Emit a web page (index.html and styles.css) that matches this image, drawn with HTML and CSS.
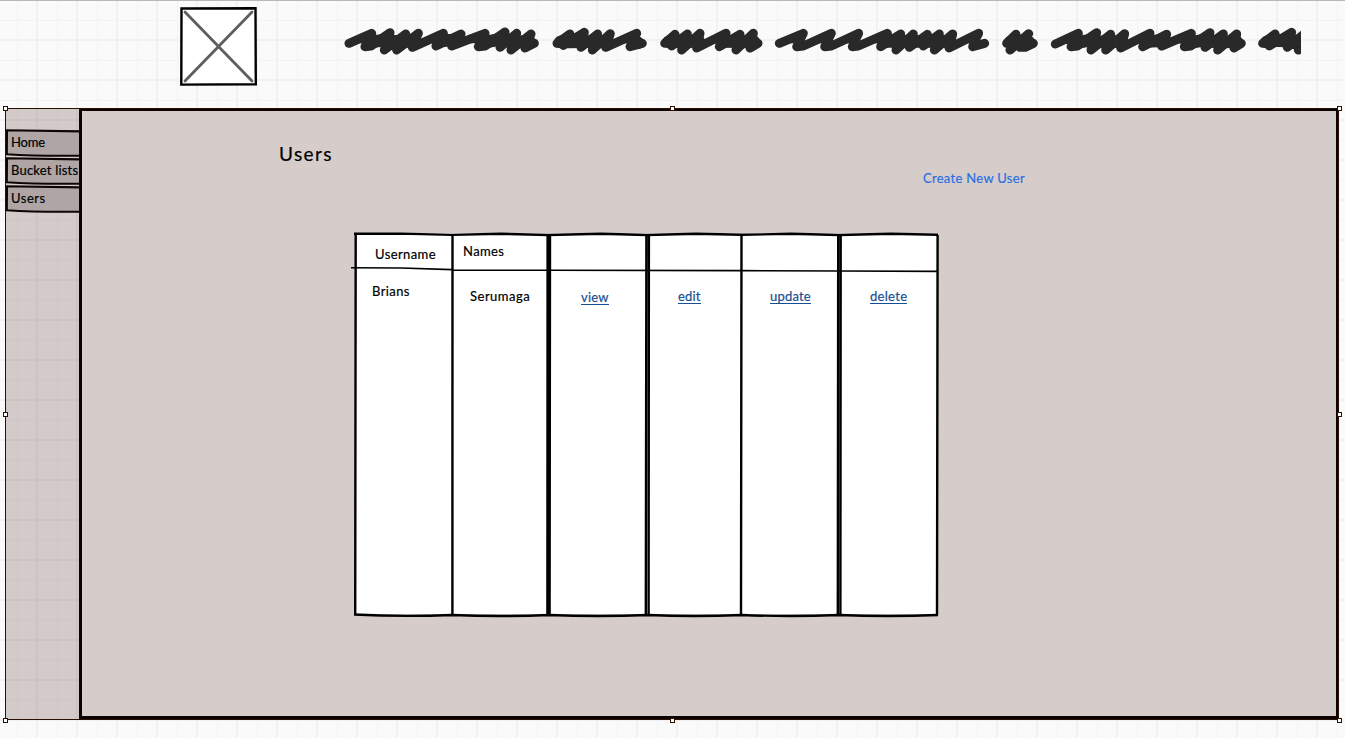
FILE: index.html
```
<!DOCTYPE html>
<html lang="en">
<head>
<meta charset="utf-8">
<title>Users</title>
<link rel="stylesheet" href="styles.css">
</head>
<body>
<div class="canvas">
  <header class="banner">
    <svg class="logo" width="77" height="79" viewBox="0 0 77 79">
      <path d="M1.5 1.5L75.5 1.2L75.8 77.3L1.3 77.6Z" fill="#fff" stroke="#000" stroke-width="2.4"/>
      <path d="M5 5L72 74M72 5L5 74" stroke="#5e5e5e" stroke-width="2.8" stroke-linecap="round"/>
    </svg>
    <svg class="scribble" width="958" height="45" viewBox="0 0 2874 135">
      <g class="ink" transform="translate(-24 0)">
        <path d="M42 70L110 40L98 60L90 80L108 78L165 38L148 90L212 42L185 90L250 40L232 82L325 40L312 60L303 78L378 42L350 78L450 40L440 60L430 80L450 78L510 36L495 82L545 40L528 90L588 42L570 84L598 70"/>
        <path class="core" d="M154 64L238 64M318 62L366 60M498 62L584 66M106 66L150 60M442 68L495 58"/>
        <path d="M666 70L705 42L685 76L748 37L738 82L788 42L772 90L826 41L812 82L905 40L895 60L885 80L922 70"/>
        <path class="core" d="M676 66L718 58M700 66L816 64M896 68L908 68"/>
      </g>
      <g class="ink" transform="translate(921 0)">
        <path d="M44 70L75 43L65 78L112 42L95 90L150 40L140 84L228 40L215 60L208 80L270 43L258 90L310 40L300 84L324 70"/>
        <path class="core" d="M56 66L146 64M222 64L312 66"/>
        <path d="M388 70L460 40L450 60L440 80L460 78L544 40L534 60L524 80L544 78L626 40L616 60L607 80L625 78L712 40L700 60L692 80L752 42L738 90L790 42L778 82L832 43L820 78L868 42L853 90L908 42L897 84L986 40L975 60L968 80L1004 70"/>
        <path class="core" d="M704 64L900 64"/>
      </g>
      <g class="ink" transform="translate(1941 0)">
        <path d="M50 70L78 43L60 90L116 41L90 82L105 82L130 70"/>
        <path class="core" d="M62 66L116 66"/>
        <path d="M196 72L265 40L253 60L243 80L262 78L320 38L303 90L362 43L347 90L404 41L392 84L480 40L468 60L458 80L530 43L515 78L604 40L592 60L583 80L602 78L660 38L645 82L700 42L683 90L740 42L732 84L754 70"/>
        <path class="core" d="M258 68L304 60M310 66L396 64M470 64L522 62M598 68L644 60M650 64L740 66"/>
        <path d="M818 70L855 42L838 78L905 37L892 82L945 40L925 90"/>
        <path class="core" d="M830 66L862 60M860 62L940 64"/>
      </g>
    </svg>
  </header>

  <main class="frame">
    <nav class="tabs">
      <a class="tab"><svg class="tab-line" viewBox="0 0 75 28"><path d="M75 2.4L1 1.3L.8 25.3Q30 27.2 75 26.7"/></svg><span class="tab-home">Home</span></a>
      <a class="tab"><svg class="tab-line" viewBox="0 0 75 28"><path d="M75 2.4L1 1.3L.8 25.3Q30 27.2 75 26.7"/></svg><span class="tab-lists">Bucket lists</span></a>
      <a class="tab"><svg class="tab-line" viewBox="0 0 75 28"><path d="M75 2.4L1 1.3L.8 25.3Q30 27.2 75 26.7"/></svg><span class="tab-users">Users</span></a>
    </nav>
    <section class="panel">
      <div class="panel-head">
        <h1 class="title">Users</h1>
        <a class="create">Create New User</a>
      </div>
      <div class="table">
        <svg class="rules" width="590" height="386" viewBox="0 0 590 386">
          <g fill="none" stroke="#000" stroke-width="2.4">
            <path d="M4.7 2L4.2 383M101.5 3L101.4 383M390.5 3L390 383M586.6 3L586 383"/>
            <path d="M3 1.8L50 1.6L101 2.9L150 1.8L197 3L250 1.8L296 3L345 1.8L391 2.8L440 1.8L488 3L540 1.8L587 2.8"/>
            <path d="M3 382.5Q50 385 101 383Q150 385 198 383Q247 385 297 383Q343 385 391 383Q439 385 488 383Q537 385 587 383"/>
            <path d="M196.6 3L196.4 383M199 3L198.6 383M295.4 3L294.8 383M297.9 3L297.6 383M487.2 3L486.8 383M489.7 3L489.4 383"/>
            <path stroke-width="1.6" d="M0 35.7L50 36L101 37.6M102 38.2L200 38.3L390 38.6L490 39L587 39.4"/>
          </g>
        </svg>
        <div class="col"><b class="cell c-username">Username</b><span class="cell c-brians">Brians</span></div>
        <div class="col"><b class="cell c-names">Names</b><span class="cell c-serumaga">Serumaga</span></div>
        <div class="col"><a class="link l-view">view</a></div>
        <div class="col"><a class="link l-edit">edit</a></div>
        <div class="col"><a class="link l-update">update</a></div>
        <div class="col"><a class="link l-delete">delete</a></div>
      </div>
    </section>
    <i class="handle nw"></i><i class="handle n"></i><i class="handle ne"></i>
    <i class="handle w"></i><i class="handle e"></i>
    <i class="handle sw"></i><i class="handle s"></i><i class="handle se"></i>
  </main>
</div>
</body>
</html>
```
FILE: styles.css
```
* { box-sizing: border-box; }
body {
  margin: 0; overflow: hidden; color: #000;
  font-family: Lato, "Open Sans", sans-serif; font-size: 13px; line-height: 16px;
  -webkit-text-stroke: .2px currentColor;
}
.canvas {
  width: 1345px; height: 738px; border-top: 1px solid #b8b8b8;
  background-color: #fafafa;
  background-image:
    linear-gradient(90deg, #f1f1f1 2px, transparent 2px),
    linear-gradient(#f1f1f1 2px, transparent 2px),
    linear-gradient(90deg, #f3f3f3 1px, transparent 1px),
    linear-gradient(#f3f3f3 1px, transparent 1px);
  background-size: 40px 40px;
  background-position: 36px 0, 0 38px, 17px 0, 0 19px;
}
.banner { display: flex; height: 107px; padding: 6px 0 0 180px; }
.logo { flex: none; display: block; }
.scribble { display: block; flex: none; margin: 13px 0 0 86px; overflow: hidden; }
.ink { fill: #292929; stroke: #292929; stroke-width: 27px; stroke-linecap: round; stroke-linejoin: round; }
.core { stroke-width: 38px; }

.frame {
  position: relative; display: flex; width: 1334px; height: 612px; margin-left: 5px;
  border: 1px solid #2b0f00; background: rgba(100, 70, 66, .26);
}
.tabs { flex: none; width: 73px; padding-top: 20px; }
.tab { position: relative; display: flex; height: 28px; padding: 5px 0 0 5px; letter-spacing: .1px; white-space: nowrap; }
.tab span { position: relative; }
.tab-home { letter-spacing: -.2px; }
.tab-lists { letter-spacing: .2px; }
.tab-users { letter-spacing: .5px; }
.tab-line { position: absolute; left: 0; top: 0; width: 75px; height: 28px; }
.tab-line path { fill: #aea5a4; stroke: #0d0503; stroke-width: 2.1px; }
.panel { position: relative; flex: 1; border: solid #0b0200; border-width: 2px 2px 3px 3px; background: #d6cdcb; }
.panel-head { display: flex; height: 122px; }
.title { margin: 30px 0 0 197px; width: 644px; font-size: 19px; line-height: 26px; font-weight: 400; letter-spacing: 1.4px; }
.create { margin-top: 59px; color: #2b6fe0; letter-spacing: .3px; }
.table { position: relative; display: grid; grid-template-columns: 97px 96px 99px 94px 98px 98px; width: 582px; height: 381px; margin-left: 273px; background: #fff; }
.rules { position: absolute; left: -4px; top: -1px; }
.col { position: relative; display: flex; flex-direction: column; align-items: flex-start; }
.cell { display: block; font-weight: 400; letter-spacing: .4px; }
.c-username { margin: 13px 0 0 20px; }
.c-brians { margin: 21px 0 0 17px; }
.c-names { margin: 10px 0 0 11px; }
.c-serumaga { margin: 29px 0 0 18px; letter-spacing: .5px; }
.link { margin-top: 56px; color: #174f94; line-height: 14px; border-bottom: 1px solid #174f94; letter-spacing: .2px; }
.l-view { margin: 57px 0 0 33px; }
.l-edit { margin-left: 31px; }
.l-update { margin-left: 29px; }
.l-delete { margin-left: 31px; letter-spacing: .3px; }

.handle { position: absolute; width: 5px; height: 5px; border: 1px solid #2b0f00; background: #fff; }
.nw, .w, .sw { left: -3px; }
.n, .s { left: 664px; }
.ne, .e, .se { right: -4px; }
.nw, .n, .ne { top: -3px; }
.w, .e { top: 303px; }
.sw, .s, .se { bottom: -4px; }
```
